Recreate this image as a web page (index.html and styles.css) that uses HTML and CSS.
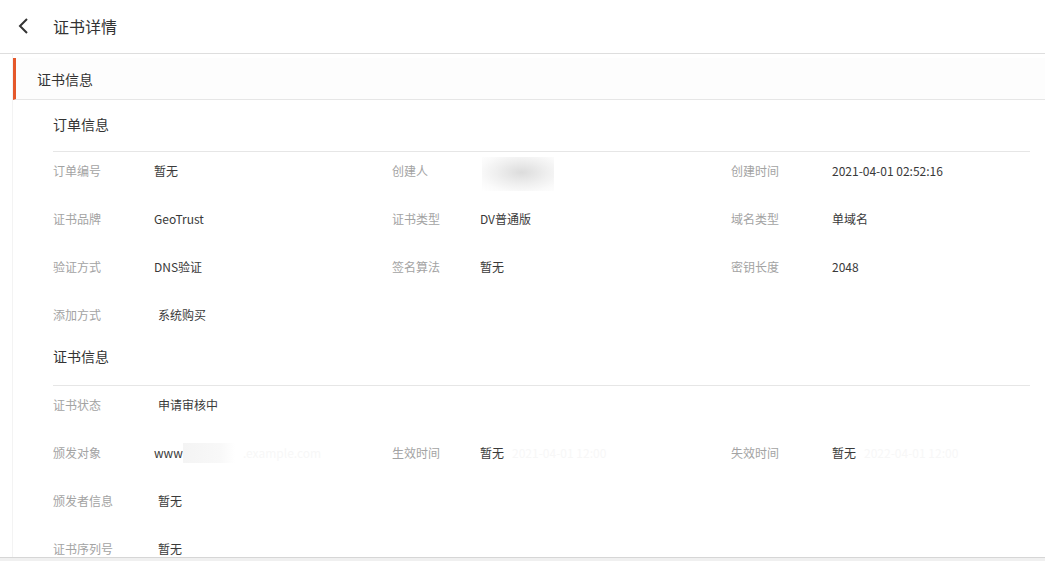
FILE: index.html
```html
<!DOCTYPE html>
<html lang="zh-CN">

<head>
    <meta charset="UTF-8">
    <title>证书详情</title>
    <link rel="stylesheet" href="styles.css">
</head>

<body>
    <header class="topbar">
        <span class="tilbage">
            <svg width="14" height="18" viewBox="0 0 14 18">
                <path d="M10 2 L3 9 L10 16" fill="none" stroke="#333" stroke-width="2" />
            </svg>
        </span>
        <h1>证书详情</h1>
    </header>

    <main class="indhold">
        <div class="fane">证书信息</div>

        <section class="boks">
            <h2 class="overskrift">订单信息</h2>
            <div class="raekker">
                <div class="felt"><span class="navn">订单编号</span><span class="vaerdi">暂无</span></div>
                <div class="felt felt-midt"><span class="navn">创建人</span><span class="vaerdi"><span class="sloret"></span></span></div>
                <div class="felt"><span class="navn">创建时间</span><span class="vaerdi">2021-04-01 02:52:16</span></div>

                <div class="felt"><span class="navn">证书品牌</span><span class="vaerdi">GeoTrust</span></div>
                <div class="felt felt-midt"><span class="navn">证书类型</span><span class="vaerdi">DV普通版</span></div>
                <div class="felt"><span class="navn">域名类型</span><span class="vaerdi">单域名</span></div>

                <div class="felt"><span class="navn">验证方式</span><span class="vaerdi">DNS验证</span></div>
                <div class="felt felt-midt"><span class="navn">签名算法</span><span class="vaerdi">暂无</span></div>
                <div class="felt"><span class="navn">密钥长度</span><span class="vaerdi">2048</span></div>

                <div class="felt"><span class="navn">添加方式</span><span class="vaerdi skub">系统购买</span></div>
            </div>

            <h2 class="overskrift overskrift-to">证书信息</h2>
            <div class="raekker">
                <div class="felt hel"><span class="navn">证书状态</span><span class="vaerdi skub">申请审核中</span></div>

                <div class="felt"><span class="navn">颁发对象</span><span class="vaerdi">www<span class="skjult"></span><span class="spoegelse">.example.com</span></span></div>
                <div class="felt felt-midt"><span class="navn">生效时间</span><span class="vaerdi">暂无<span class="spoegelse">2021-04-01 12:00</span></span></div>
                <div class="felt"><span class="navn">失效时间</span><span class="vaerdi">暂无<span class="spoegelse">2022-04-01 12:00</span></span></div>

                <div class="felt hel"><span class="navn">颁发者信息</span><span class="vaerdi skub">暂无</span></div>
                <div class="felt hel"><span class="navn">证书序列号</span><span class="vaerdi skub">暂无</span></div>
            </div>
        </section>
    </main>

    <div class="bund"></div>
</body>

</html>
```

FILE: styles.css
```css
* {
    box-sizing: border-box;
}

html,
body {
    margin: 0px;
    height: 561px;
    overflow: hidden;
}

body {
    display: flex;
    flex-direction: column;
    background: #fff;
    font-family: "Microsoft YaHei", "Noto Sans CJK SC", "Noto Sans", sans-serif;
    color: #333;
}

.topbar {
    height: 54px;
    flex-shrink: 0;
    display: flex;
    align-items: center;
    border-bottom: 1px solid #dedede;
    padding-left: 17px;
    padding-bottom: 2px;
}

.tilbage {
    display: flex;
    width: 36px;
}

h1 {
    margin: 0px;
    font-size: 16px;
    font-weight: normal;
    line-height: 20px;
    color: #333;
}

.indhold {
    flex: 1;
    overflow: hidden;
    margin-left: 12px;
    border-left: 1px solid #f3f3f3;
}

.fane {
    margin-top: 4px;
    height: 42px;
    line-height: 42px;
    padding-left: 21px;
    font-size: 14px;
    border-left: 3px solid #e5582b;
    background-color: #fdfdfd;
    border-bottom: 1px solid #e6e6e6;
}

.boks {
    padding: 0px 15px 0px 40px;
}

.overskrift {
    margin: 0px;
    font-size: 14px;
    font-weight: normal;
    line-height: 20px;
    padding: 14px 0px 17px;
    border-bottom: 1px solid #e6e6e6;
}

.overskrift-to {
    padding: 2px 0px 19px;
}

.raekker {
    display: grid;
    grid-template-columns: 339px 339px 1fr;
}

.felt {
    height: 48px;
    padding-top: 9px;
    display: flex;
    font-size: 12px;
    line-height: 20px;
    white-space: nowrap;
}

.hel {
    grid-column: 1/4;
}

.navn {
    width: 101px;
    color: #a3a3a3;
}

.felt-midt .navn {
    width: 88px;
}

.vaerdi {
    color: #3a3a3a;
    display: flex;
    align-items: center;
    height: 20px;
}

.skub {
    padding-left: 4px;
}

.sloret {
    display: block;
    width: 72px;
    height: 34px;
    margin-top: 6px;
    margin-left: 2px;
    background: radial-gradient(ellipse at 55% 45%, #dcdcdc 0%, #efefef 45%, #fafafa 75%, #fff 100%);
}

.skjult {
    display: block;
    width: 52px;
    height: 20px;
    background: linear-gradient(90deg, #f4f4f4, #f8f8f8 70%, #fff);
}

.spoegelse {
    color: #f7f7f7;
    padding-left: 8px;
}

.bund {
    height: 4px;
    flex-shrink: 0;
    border-top: 1px solid #d6d6d6;
    background-color: #f0f0f0;
}
```
